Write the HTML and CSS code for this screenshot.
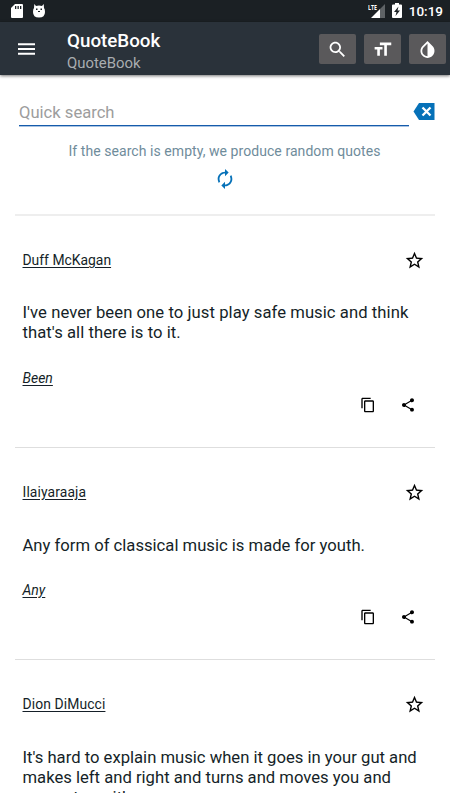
FILE: index.html
```html
<!DOCTYPE html>
<html lang="en">
<head>
<meta charset="utf-8">
<title>QuoteBook</title>
<link rel="stylesheet" href="styles.css">
</head>
<body>
<svg width="0" height="0" class="defs">
  <symbol id="star" viewBox="0 0 24 24"><path d="M22 9.24l-7.19-.62L12 2 9.19 8.63 2 9.24l5.46 4.73L5.82 21 12 17.27 18.18 21l-1.63-7.03L22 9.24zM12 15.4l-3.76 2.27 1-4.28-3.32-2.88 4.38-.38L12 6.1l1.71 4.04 4.38.38-3.32 2.88 1 4.28L12 15.4z"/></symbol>
  <symbol id="copy" viewBox="0 0 24 24"><path d="M16 1H4c-1.1 0-2 .9-2 2v14h2V3h12V1zm3 4H8c-1.1 0-2 .9-2 2v14c0 1.1.9 2 2 2h11c1.1 0 2-.9 2-2V7c0-1.1-.9-2-2-2zm0 16H8V7h11v14z"/></symbol>
  <symbol id="share" viewBox="0 0 24 24"><path d="M18 16.08c-.76 0-1.44.3-1.96.77L8.91 12.7c.05-.23.09-.46.09-.7s-.04-.47-.09-.7l7.05-4.11c.54.5 1.25.81 2.04.81 1.66 0 3-1.34 3-3s-1.34-3-3-3-3 1.34-3 3c0 .24.04.47.09.7L8.04 9.81C7.5 9.31 6.79 9 6 9c-1.66 0-3 1.34-3 3s1.34 3 3 3c.79 0 1.5-.31 2.04-.81l7.12 4.16c-.05.21-.08.43-.08.65 0 1.61 1.31 2.92 2.92 2.92s2.92-1.31 2.92-2.92-1.31-2.92-2.92-2.92z"/></symbol>
</svg>
<div class="status">
  <div class="notices">
    <svg class="sd" viewBox="0 0 12 14"><path d="M4 0h7a1 1 0 0 1 1 1v12a1 1 0 0 1-1 1H1a1 1 0 0 1-1-1V4z"/><path class="cut" d="M4 2h1.3v3H4zM6.5 2h1.3v3H6.5zM9 2h1.3v3H9z"/></svg>
    <svg class="bug" viewBox="0 0 12 14"><path d="M1.3 0L3 2Q6 1 9 2L10.7 0 11 4Q12 5 12 8 12 13.5 6 13.5T0 8Q0 5 1 4z"/><path class="cut" d="M3 4.5h1.5V6H3zM7.5 4.5H9V6H7.5zM5 7h2v1H5z"/></svg>
  </div>
  <div class="system">
    <span class="lte">LTE</span>
    <svg class="signal" viewBox="0 0 14 14"><path class="dim" d="M14 0v14h-5V5z"/><path d="M9 5v9H0z"/></svg>
    <svg class="battery" viewBox="0 0 10 15"><path d="M3 0h4v1.500h2a1 1 0 0 1 1 1V14a1 1 0 0 1-1 1H1a1 1 0 0 1-1-1V2.500a1 1 0 0 1 1-1h2z"/><path class="cut" d="M6.500 3.500L2 9h2.500l-1 4L8 7.500H5.500z"/></svg>
    <span class="clock">10:19</span>
  </div>
</div>
<header class="bar">
  <svg class="menu" viewBox="0 0 18 12"><path d="M0 0h18v2H0zM0 5h18v2H0zM0 10h18v2H0z"/></svg>
  <div class="titles"><h1>QuoteBook</h1><p>QuoteBook</p></div>
  <div class="tools">
    <button aria-label="Search"><svg viewBox="0 0 24 24"><path d="M15.500 14h-.79l-.28-.27C15.410 12.590 16 11.110 16 9.500 16 5.910 13.090 3 9.500 3S3 5.910 3 9.500 5.910 16 9.500 16c1.610 0 3.090-.59 4.230-1.570l.27.28v.79l5 4.990L20.490 19l-4.990-5zm-6 0C7.010 14 5 11.990 5 9.500S7.010 5 9.500 5 14 7.010 14 9.500 11.990 14 9.500 14z"/></svg></button>
    <button aria-label="Text size"><svg viewBox="0 0 24 24"><path d="M9 4v3h5v12h3V7h5V4H9zm-6 8h3v7h3v-7h3V9H3v3z"/></svg></button>
    <button aria-label="Contrast"><svg viewBox="0 0 24 24"><path d="M17.660 7.930L12 2.270 6.340 7.930c-3.120 3.120-3.120 8.190 0 11.310C7.900 20.800 9.950 21.580 12 21.580s4.100-.78 5.660-2.340c3.120-3.120 3.120-8.190 0-11.310zM12 19.590c-1.600 0-3.110-.62-4.240-1.760C6.620 16.690 6 15.190 6 13.590s.62-3.110 1.760-4.240L12 5.100v14.490z"/></svg></button>
  </div>
</header>
<main>
  <section class="search">
    <div class="field">
      <input type="text" placeholder="Quick search">
      <svg class="clear" viewBox="0 0 21 17"><path d="M5.500 0H21v17H5.500L0 8.500z"/><path class="x" d="M9 4.500l8 8M17 4.500l-8 8"/></svg>
    </div>
    <p class="hint">If the search is empty, we produce random quotes</p>
    <svg class="refresh" viewBox="0 0 24 24"><path d="M12 6v3l4-4-4-4v3c-4.420 0-8 3.580-8 8 0 1.570.46 3.030 1.240 4.260L6.700 14.800c-.45-.83-.7-1.790-.7-2.800 0-3.310 2.690-6 6-6zm6.760 1.740L17.300 9.200c.44.84.7 1.790.7 2.800 0 3.310-2.690 6-6 6v-3l-4 4 4 4v-3c4.420 0 8-3.580 8-8 0-1.570-.46-3.030-1.240-4.260z"/></svg>
  </section>
  <article class="quote first">
    <div class="head"><a>Duff McKagan</a><svg class="star"><use href="#star"/></svg></div>
    <p class="text">I've never been one to just play safe music and think<br>that's all there is to it.</p>
    <a class="tag">Been</a>
    <div class="actions"><svg class="copy"><use href="#copy"/></svg><svg class="share"><use href="#share"/></svg></div>
  </article>
  <article class="quote">
    <div class="head"><a>Ilaiyaraaja</a><svg class="star"><use href="#star"/></svg></div>
    <p class="text">Any form of classical music is made for youth.</p>
    <a class="tag">Any</a>
    <div class="actions"><svg class="copy"><use href="#copy"/></svg><svg class="share"><use href="#share"/></svg></div>
  </article>
  <article class="quote">
    <div class="head"><a>Dion DiMucci</a><svg class="star"><use href="#star"/></svg></div>
    <p class="text">It's hard to explain music when it goes in your gut and<br>makes left and right and turns and moves you and<br>resonates with</p>
  </article>
</main>
</body>
</html>
```
FILE: styles.css
```css
* { box-sizing: border-box; margin: 0; padding: 0; }
body { width: 450px; height: 800px; overflow: hidden; background: #fff; font-family: Roboto, sans-serif; color: #151f28; display: flex; flex-direction: column; }
svg { display: block; flex: none; }
.defs { position: absolute; }
.status { height: 22px; flex: none; background: #1b2024; display: flex; justify-content: space-between; padding: 0 7px 0 11px; fill: #fff; color: #fff; }
.notices { display: flex; gap: 10px; padding-top: 4px; }
.sd { width: 12px; height: 14px; }
.bug { width: 12px; height: 14px; }
.cut { fill: #1b2024; }
.system { display: flex; padding-top: 4px; }
.lte { font: 700 7.500px/7px "Open Sans", Roboto, sans-serif; width: 14px; transform: scaleX(.7); transform-origin: 0 0; margin-right: -11px; }
.signal { width: 14px; height: 14px; }
.dim { fill: #5f6366; }
.battery { width: 10px; height: 15px; margin: -1px 7px 0 7px; }
.clock { font-size: 13.500px; line-height: 15px; font-weight: 500; }
.bar { height: 53px; flex: none; background: #2a323a; display: flex; padding-left: 18px; box-shadow: 0 1px 3px rgba(0,0,0,.55); }
.menu { width: 17px; height: 12px; margin-top: 21px; fill: #fff; }
.titles { margin-left: 32px; padding-top: 8px; flex: 1; }
h1 { font-size: 18.800px; line-height: 22px; font-weight: 500; color: #fff; }
.titles p { font-size: 14.900px; line-height: 20px; margin-top: 1px; color: #a9adb0; }
.tools { display: flex; gap: 8px; padding: 12px 4px 0 0; }
button { width: 37px; height: 30px; border: 0; border-radius: 2px; background: #5a595b; display: grid; place-items: center; }
button svg { width: 21px; height: 21px; fill: #fff; }
main { height: 718px; flex: none; overflow: hidden; padding: 0 15px; }
.search { height: 141px; border-bottom: 2px solid #eee; }
.field { display: flex; justify-content: space-between; padding: 24px 0 0 4px; }
input { width: 390px; height: 27px; border: 0; border-bottom: 1px solid #165cab; box-shadow: 0 1px 0 #a9c3e2; font: 16.600px Roboto, sans-serif; outline: 0; background: none; }
input::placeholder { color: #9d9d9d; opacity: 1; }
.clear { width: 22px; height: 17px; margin-top: 4px; fill: #0671b8; }
.x { stroke: #fff; stroke-width: 2.300; }
.hint { font-size: 14px; line-height: 18px; letter-spacing: .06px; margin: 16px 1px 0 0; text-align: center; color: #6f8c9b; }
.refresh { width: 22px; height: 22px; fill: #0671b8; margin: 8px auto 0; }
.quote { border-bottom: 1px solid #dedede; padding: 33px 8px 34px 7.500px; }
.head { display: flex; justify-content: space-between; height: 22px; font-size: 13.900px; line-height: 22px; letter-spacing: .1px; }
.first .head { letter-spacing: 0; }
.head a, .tag { text-decoration: underline; text-underline-offset: 2px; }
.star { width: 21px; height: 21px; margin: 1px 2px 0 0; }
.text { font-size: 16.650px; line-height: 20px; margin-top: 33px; white-space: nowrap; }
.first .text { margin-top: 32px; letter-spacing: .06px; }
.tag { display: block; font-size: 14px; line-height: 18px; font-style: italic; margin-top: 25px; }
.first .tag { margin-top: 26px; }
.actions { display: flex; justify-content: flex-end; gap: 24px; padding-right: 11px; margin-top: 10px; fill: #000; }
.copy, .share { width: 16px; height: 16px; }
```
